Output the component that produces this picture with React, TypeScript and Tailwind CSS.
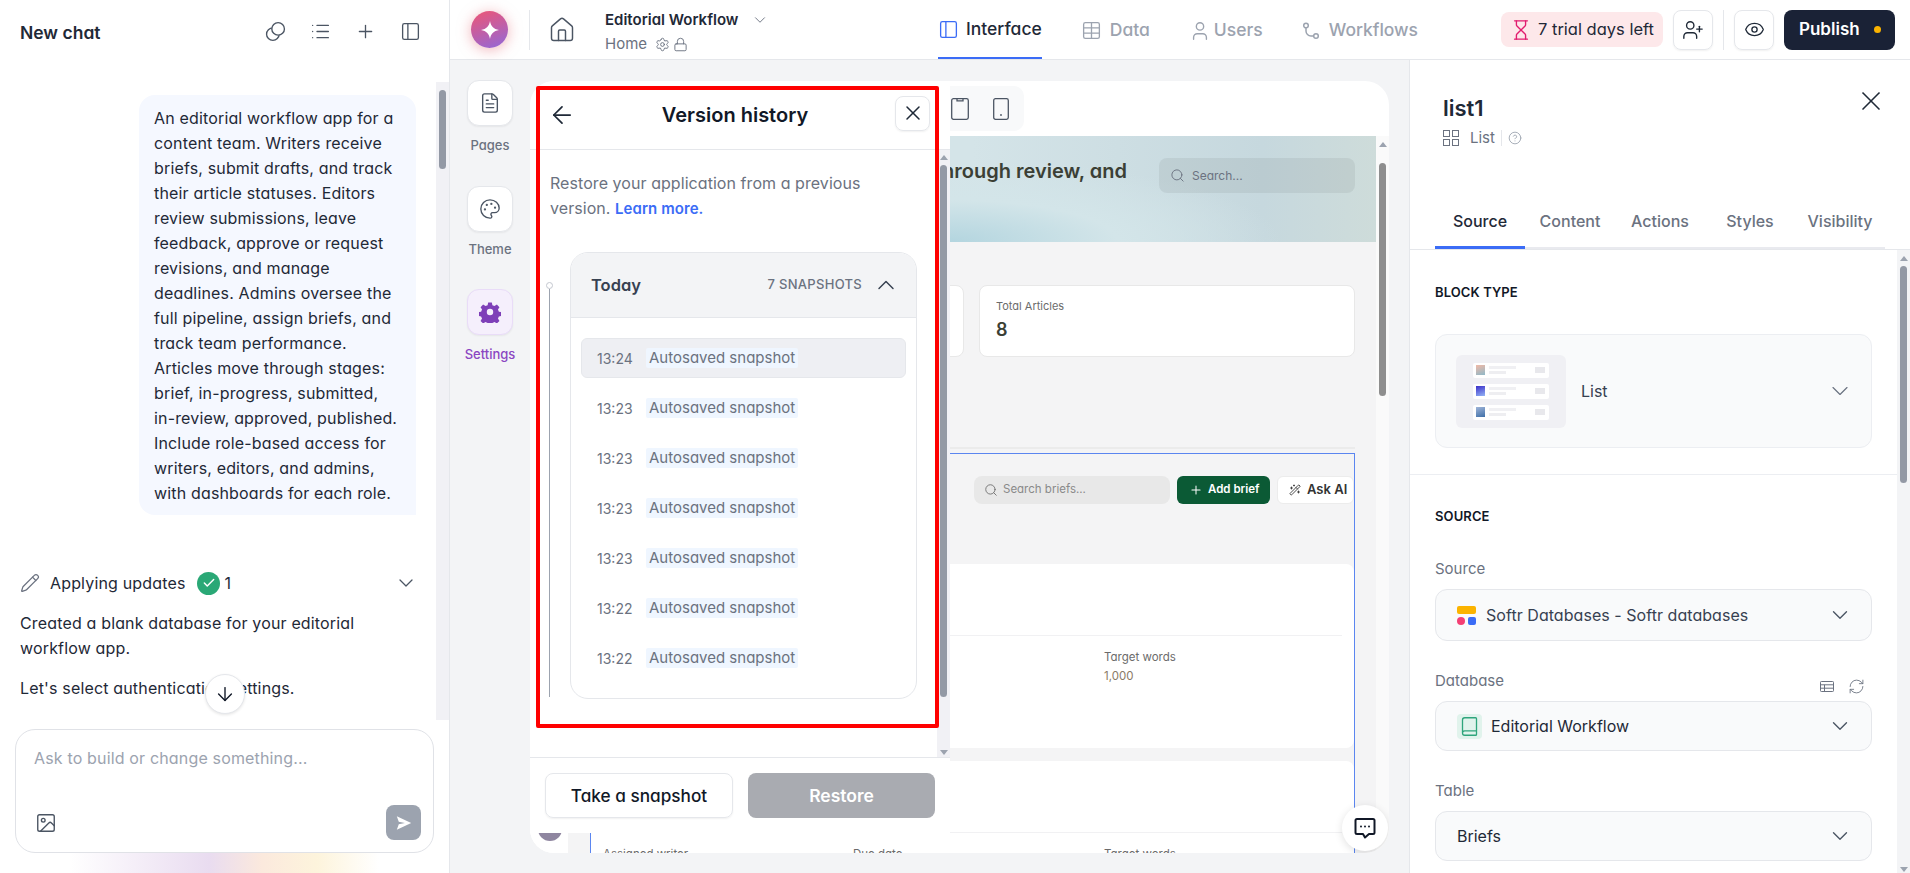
import {
  ArrowDown, ArrowLeft, ChevronDown, ChevronUp, CircleHelp, Eye, FileText, Hourglass, House, Image as ImageIcon,
  List, Lock, Palette, PanelLeft, Pencil, Plus, RefreshCw, Search, Settings, Table, User, UserPlus, X, Check, Book, WandSparkles,
} from "lucide-react";

function Up() {
  return <div className="w-0 h-0 border-x-[4px] border-x-transparent border-b-[5px] border-b-[#9ca3af]" />;
}
function Down() {
  return <div className="w-0 h-0 border-x-[4px] border-x-transparent border-t-[5px] border-t-[#9ca3af]" />;
}

function Row({ time, active }: { time: string; active?: boolean }) {
  return (
    <div className={active ? "h-[40px] mx-[10px] flex items-center rounded-[6px] border border-[#e5e7eb] bg-[#eeeff3] pl-[15px] text-[15px] text-[#6b7280]" : "h-[40px] mx-[10px] mt-[10px] flex items-center pl-[16px] text-[15px] text-[#6b7280]"}>
      <span className="w-[49px] shrink-0 text-[14px]">{time}</span>
      <span className="px-[3px] h-[20px] leading-[20px] rounded-[2px] bg-[#eff6ff]">Autosaved snapshot</span>
    </div>
  );
}

function VersionPanel() {
  return (
    <div className="absolute left-0 top-0 z-20 w-[420px] h-[752px] bg-white rounded-tl-[24px] flex flex-col">
      <div className="h-[69px] shrink-0 border-b border-[#e5e7eb] flex items-center relative">
        <ArrowLeft className="ml-[18px] size-[28px] text-[#1f2937]" strokeWidth={1.5} />
        <div className="absolute left-0 top-[20px] w-[410px] text-center text-[20px] leading-[28px] font-semibold text-[#111827]">Version history</div>
        <div className="ml-auto mr-[20px] mt-[-4px] size-[35px] rounded-[8px] border border-[#e5e7eb] flex items-center justify-center shadow-[0_1px_2px_rgba(0,0,0,0.06)]">
          <X className="size-[24px] text-[#1f2937]" strokeWidth={1.5} />
        </div>
      </div>
      <div className="flex h-[607px] shrink-0">
        <div className="flex-1 min-w-0">
          <div className="pl-[20px] pt-[21px] text-[16px] tracking-[0.06px] leading-[25px] text-[#6b7280]">
            <div>Restore your application from a previous</div>
            <div>version. <span className="text-[15px] font-semibold text-[#3b6cf6]">Learn more.</span></div>
          </div>
          <div className="flex mt-[31px] pl-[16px]">
            <div className="w-[6px] flex flex-col items-center pt-[30px]">
              <div className="size-[7px] rounded-full border border-[#c4c7cf] bg-white shrink-0" />
              <div className="w-px bg-[#9ca3af] h-[408px]" />
            </div>
            <div className="ml-[18px] w-[347px] h-[447px] rounded-[18px] border border-[#e5e7eb] overflow-hidden">
              <div className="h-[65px] bg-[#f3f4f6] border-b border-[#e5e7eb] flex items-center pl-[20px] pr-[16px]">
                <span className="text-[16.500px] font-semibold text-[#374151]">Today</span>
                <span className="ml-auto text-[13px] tracking-[0.3px] font-medium text-[#6b7280]">7 SNAPSHOTS</span>
                <ChevronUp className="ml-[10px] size-[28px] text-[#374151]" strokeWidth={1.25} />
              </div>
              <div className="pt-[20px]">
                <Row time="13:24" active />
                <Row time="13:23" />
                <Row time="13:23" />
                <Row time="13:23" />
                <Row time="13:23" />
                <Row time="13:22" />
                <Row time="13:22" />
              </div>
            </div>
          </div>
        </div>
        <div className="w-[13px] shrink-0 bg-[#f1f1f5] flex flex-col items-center pt-[5px] pb-[2px]">
          <Up />
          <div className="mt-[5px] w-[7px] h-[532px] rounded-full bg-[#9399a5]" />
          <div className="mt-auto"><Down /></div>
        </div>
      </div>
      <div className="h-[76px] shrink-0 border-t border-[#e5e7eb] flex items-start pt-[15px] pl-[15px] gap-[15px]">
        <div className="w-[188px] h-[45px] pt-[1px] rounded-[8px] border border-[#e5e7eb] shadow-[0_1px_2px_rgba(0,0,0,0.06)] flex items-center justify-center text-[17.200px] font-medium text-[#111827]">Take a snapshot</div>
        <div className="w-[187px] h-[45px] pt-[1px] rounded-[8px] bg-[#a9abb1] flex items-center justify-center text-[17.500px] font-semibold text-white">Restore</div>
      </div>
    </div>
  );
}

function BriefCard({ first }: { first?: boolean }) {
  return (
    <div className="h-[184px] bg-white rounded-r-[8px] overflow-hidden shrink-0">
      <div className="h-[72px] mr-[12px] border-b border-[#f1f1f3]" />
      <div className="flex pl-[12px] pt-[12px] text-[11.500px] leading-[19px] text-[#6b6b6b]">
        <div className="w-[250px]">{first ? null : "Assigned writer"}</div>
        <div className="w-[251px]">{first ? null : "Due date"}</div>
        <div>
          <div>Target words</div>
          {first ? <div className="text-[#8a7a66]">1,000</div> : null}
        </div>
      </div>
    </div>
  );
}

function Preview() {
  return (
    <div className="relative w-[859px] h-[772px] mt-[21px] bg-white rounded-[24px] overflow-hidden flex flex-col">
      <VersionPanel />
      <div className="h-[55px] shrink-0 flex items-start">
        <div className="ml-[410px] mt-[5px] w-[84px] h-[45px] rounded-r-[10px] bg-[#f8f9fa] flex items-center pl-[11px] gap-[24px] text-[#4b5563]">
          <svg viewBox="0 0 18 22" className="w-[18px] h-[22px]" fill="none" stroke="currentColor" strokeWidth="1.300">
            <rect x="0.700" y="0.700" width="16.600" height="20.600" rx="1.800" /><path d="M6 1v1.800h6V1" />
          </svg>
          <svg viewBox="0 0 16 22" className="w-[16px] h-[22px]" fill="none" stroke="currentColor" strokeWidth="1.300">
            <rect x="0.700" y="0.700" width="14.600" height="20.600" rx="1.800" /><circle cx="8" cy="17" r="0.900" fill="currentColor" stroke="none" />
          </svg>
        </div>
      </div>
      <div className="flex flex-1 min-h-0">
        <div className="w-[38px] shrink-0 bg-white relative">
          <div className="absolute left-[8px] bottom-[12px] size-[24px] rounded-full bg-[#8f86a0]" />
        </div>
        <div className="flex-1 min-w-0 bg-[#f4f4f5] flex flex-col overflow-hidden">
          <div className="h-[106px] shrink-0 bg-[radial-gradient(ellipse_at_47%_100%,#b3d5df_0%,#d3e5e9_28%,transparent_55%),linear-gradient(90deg,#d4e4e8_50%,#c6d8de_86%,#cedcda_100%)] flex justify-end pr-[21px] pt-[22px] gap-[32px]">
            <div className="text-[20px] leading-[28px] font-semibold text-[#3b3f35] whitespace-nowrap mt-[-1px]">through review, and</div>
            <div className="w-[196px] h-[35px] rounded-[8px] bg-[#0000000f] flex items-center pl-[11px] gap-[7px] text-[12px] text-[#6b7280]">
              <Search className="size-[15px]" strokeWidth={1.5} />Search...
            </div>
          </div>
          <div className="flex justify-end gap-[15px] pr-[21px] mt-[43px] shrink-0">
            <div className="w-[200px] h-[72px] rounded-[8px] bg-white border border-[#e8e8e8]" />
            <div className="w-[376px] h-[72px] rounded-[8px] bg-white border border-[#e8e8e8] pl-[16px] pt-[12px]">
              <div className="text-[11px] leading-[16px] text-[#6b6b6b]">Total Articles</div>
              <div className="text-[18px] leading-[26px] mt-[3px] font-semibold text-[#3b3f35]">8</div>
            </div>
          </div>
          <div className="mt-[90px] mr-[21px] ml-[22px] h-[2px] shrink-0 bg-[#ebebeb]" />
          <div className="mt-[4px] mr-[21px] ml-[22px] border border-b-0 border-[#5b86f0] flex-1 flex flex-col gap-[13px] min-h-0">
            <div className="h-[97px] shrink-0 flex justify-end items-start pt-[22px] gap-[7px]">
              <div className="w-[196px] h-[28px] rounded-[8px] bg-[#e8e8e8] flex items-center pl-[10px] gap-[5px] text-[11.500px] text-[#8a8a8a]">
                <Search className="size-[14px] text-[#6b6b6b]" strokeWidth={1.5} />Search briefs...
              </div>
              <div className="w-[93px] h-[28px] rounded-[6px] bg-[#0b5a35] flex items-center pl-[12px] gap-[5px] text-[11.500px] font-semibold text-white">
                <Plus className="size-[14px]" strokeWidth={1.75} />Add brief
              </div>
              <div className="w-[77px] h-[28px] rounded-[6px] bg-white border border-[#ececec] flex items-center pl-[11px] gap-[6px] text-[13px] font-semibold text-[#333]">
                <WandSparkles className="size-[12px]" strokeWidth={1.75} />Ask AI
              </div>
            </div>
            <BriefCard first />
            <BriefCard />
          </div>
        </div>
        <div className="w-[13px] shrink-0 bg-[#fafafa] flex flex-col items-center pt-[6px]">
          <Up />
          <div className="mt-[16px] w-[7px] h-[233px] rounded-full bg-[#8e8e8e]" />
        </div>
      </div>
      <div className="absolute left-[812px] top-[724px] z-30 size-[46px] rounded-full bg-white shadow-[0_2px_8px_rgba(0,0,0,0.12)] flex items-center justify-center">
        <svg viewBox="0 0 24 24" className="size-[24px]" fill="none" stroke="#111827" strokeWidth="2" strokeLinejoin="round">
          <path d="M4 3h16a1.500 1.500 0 0 1 1.500 1.500v12a1.500 1.500 0 0 1-1.500 1.500h-4l-4 3.500-2-3.500H4a1.500 1.500 0 0 1-1.500-1.500v-12A1.500 1.500 0 0 1 4 3Z" />
          <circle cx="8" cy="10.500" r="1" fill="#111827" stroke="none" />
          <circle cx="12" cy="10.500" r="1" fill="#111827" stroke="none" />
          <circle cx="16" cy="10.500" r="1" fill="#111827" stroke="none" />
        </svg>
      </div>
    </div>
  );
}

function RailItem({ label, active, top, gap, children }: { label: string; active?: boolean; top: string; gap: string; children: React.ReactNode }) {
  return (
    <div className={"flex flex-col items-center w-[70px] " + top}>
      <div className={active ? "size-[46px] rounded-[12px] border border-[#e9dcf8] bg-[#f5effc] shadow-[0_1px_2px_rgba(0,0,0,0.06)] flex items-center justify-center" : "size-[46px] rounded-[12px] border border-[#e5e7eb] bg-white shadow-[0_1px_2px_rgba(0,0,0,0.06)] flex items-center justify-center"}>
        {children}
      </div>
      <div className={gap + (active ? " text-[13px] leading-[16px] font-medium text-[#8b46c2]" : " text-[13px] leading-[16px] font-medium text-[#6b7280]")}>{label}</div>
    </div>
  );
}

function Chat() {
  return (
    <aside className="w-[450px] shrink-0 h-full border-r border-[#e5e7eb] bg-white flex flex-col">
      <div className="h-[82px] shrink-0 flex items-start pt-[21px] pl-[20px] pr-[28px]">
        <div className="text-[17.500px] leading-[24px] font-semibold text-[#1f2937]">New chat</div>
        <div className="ml-auto flex gap-[24px] text-[#4b5563]">
          <svg viewBox="0 0 20 20" className="size-[21px]" fill="none" stroke="currentColor" strokeWidth="1.300">
            <circle cx="7.500" cy="12.500" r="6" /><circle cx="12.500" cy="7.500" r="6" fill="white" />
          </svg>
          <List className="size-[21px]" strokeWidth={1.5} />
          <Plus className="size-[21px]" strokeWidth={1.5} />
          <PanelLeft className="size-[21px]" strokeWidth={1.5} />
        </div>
      </div>
      <div className="h-[638px] shrink-0 flex relative">
        <div className="flex-1 min-w-0 overflow-hidden text-[16px] tracking-[0.16px] leading-[25px] text-[#1f2937]">
          <div className="ml-[139px] mt-[13px] w-[277px] h-[420px] rounded-[16px] rounded-br-none bg-[#f5f8ff] pl-[15px] pt-[11px]">
            <div>An editorial workflow app for a</div>
            <div>content team. Writers receive</div>
            <div>briefs, submit drafts, and track</div>
            <div>their article statuses. Editors</div>
            <div>review submissions, leave</div>
            <div>feedback, approve or request</div>
            <div>revisions, and manage</div>
            <div>deadlines. Admins oversee the</div>
            <div>full pipeline, assign briefs, and</div>
            <div>track team performance.</div>
            <div>Articles move through stages:</div>
            <div>brief, in-progress, submitted,</div>
            <div>in-review, approved, published.</div>
            <div>Include role-based access for</div>
            <div>writers, editors, and admins,</div>
            <div>with dashboards for each role.</div>
          </div>
          <div className="ml-[20px] mr-[18px] mt-[56px] h-[24px] flex items-center">
            <Pencil className="size-[20px] text-[#6b7280]" strokeWidth={1.5} />
            <span className="ml-[10px]">Applying updates</span>
            <span className="ml-[12px] size-[23px] rounded-full bg-[#2aa876] flex items-center justify-center">
              <Check className="size-[14px] text-white" strokeWidth={2.5} />
            </span>
            <span className="ml-[4px]">1</span>
            <ChevronDown className="ml-auto size-[24px] text-[#4b5563]" strokeWidth={1.25} />
          </div>
          <div className="ml-[20px] mt-[16px]">
            <div>Created a blank database for your editorial</div>
            <div>workflow app.</div>
            <div className="mt-[15px]">Let's select authentication settings.</div>
          </div>
        </div>
        <div className="absolute left-[205px] top-[592px] size-[40px] rounded-full bg-white border border-[#e5e7eb] shadow-[0_1px_3px_rgba(0,0,0,0.1)] flex items-center justify-center">
          <ArrowDown className="size-[22px] text-[#111827]" strokeWidth={1.5} />
        </div>
        <div className="w-[13px] shrink-0 bg-[#f1f1f5] flex flex-col items-center pt-[8px]">
          <div className="w-[7px] h-[79px] rounded-full bg-[#9399a5]" />
        </div>
      </div>
      <div className="mt-[9px] ml-[15px] w-[419px] h-[124px] shrink-0 rounded-[20px] border border-[#e0e2e7] relative flex flex-col">
        <div className="pl-[18px] pt-[16px] text-[16px] tracking-[0.16px] leading-[24px] text-[#9ca3af]">Ask to build or change something...</div>
        <div className="mt-auto mb-[12px] pl-[19px] pr-[12px] flex items-center justify-between">
          <ImageIcon className="size-[22px] text-[#4b5563]" strokeWidth={1.5} />
          <div className="size-[35px] rounded-[8px] bg-[#9ca3af] flex items-center justify-center">
            <svg viewBox="0 0 20 20" className="size-[18px]" fill="white"><path d="M2 2.500 18 10 2 17.500l2.200-6.200L11 10 4.200 8.700Z" /></svg>
          </div>
        </div>
      </div>
      <div className="mx-[70px] h-[20px] bg-[linear-gradient(90deg,#ffffff_0%,#e9dcf0_45%,#fbe9dd_62%,#fdf4dc_80%,#ffffff_100%)]" />
    </aside>
  );
}

function TopBar() {
  return (
    <header className="h-[60px] shrink-0 bg-white border-b border-[#e5e7eb] flex items-center">
      <div className="ml-[21px] size-[37px] rounded-full bg-[linear-gradient(160deg,#e5577e_10%,#9b66cf_90%)] shadow-[0_2px_14px_rgba(229,120,130,0.55)] flex items-center justify-center">
        <svg viewBox="0 0 20 20" className="size-[20px]" fill="white"><path d="M10 1c.8 5 3.500 8.200 9 9-5.500.8-8.200 4-9 9-.8-5-3.500-8.200-9-9 5.500-.8 8.200-4 9-9Z" /></svg>
      </div>
      <div className="ml-[21px] w-px h-[40px] bg-[#e5e7eb]" />
      <House className="ml-[18px] size-[28px] text-[#4b5563]" strokeWidth={1.25} />
      <div className="ml-[29px] w-[333px] mt-[5px]">
        <div className="flex items-center h-[24px] text-[15px] font-semibold text-[#1f2937]">
          Editorial Workflow
          <ChevronDown className="ml-[13px] size-[18px] text-[#6b7280]" strokeWidth={1.25} />
        </div>
        <div className="flex items-center h-[24px] text-[15px] text-[#6b7280]">
          Home
          <Settings className="ml-[8px] size-[15px]" strokeWidth={1.5} />
          <Lock className="ml-[3px] size-[15px]" strokeWidth={1.5} />
        </div>
      </div>
      <div className="h-full flex items-center text-[17.500px] font-medium text-[#9ca3af] gap-[39px]">
        <div className="h-full flex items-center gap-[7px] pt-[2px] border-b-2 border-[#3b6cf6] text-[#1f2937]">
          <PanelLeft className="size-[21px] text-[#3b6cf6]" strokeWidth={1.5} />Interface
        </div>
        <div className="flex items-center gap-[8px] pt-[2px]">
          <Table className="size-[21px]" strokeWidth={1.5} />Data
        </div>
        <div className="flex items-center gap-[3px] pt-[2px]">
          <User className="size-[22px]" strokeWidth={1.5} />Users
        </div>
        <div className="flex items-center gap-[9px] pt-[2px]">
          <svg viewBox="0 0 18 18" className="size-[18px]" fill="none" stroke="currentColor" strokeWidth="1.500">
            <circle cx="4" cy="3.500" r="2.300" /><circle cx="14" cy="14" r="2.300" /><path d="M4 6v3a5 5 0 0 0 5 5h2.500" />
          </svg>Workflows
        </div>
      </div>
      <div className="ml-auto mr-[15px] flex items-center">
        <div className="w-[162px] h-[35px] rounded-[8px] bg-[#fde8ea] flex items-center pl-[9px] gap-[6px] text-[16.500px] text-[#1f2937]">
          <Hourglass className="size-[22px] text-[#e11d6f]" strokeWidth={1.5} />7 trial days left
        </div>
        <div className="ml-[10px] size-[40px] rounded-[8px] border border-[#e5e7eb] shadow-[0_1px_2px_rgba(0,0,0,0.06)] flex items-center justify-center">
          <UserPlus className="size-[22px] text-[#1f2937]" strokeWidth={1.5} />
        </div>
        <div className="ml-[10px] w-px h-[40px] bg-[#e5e7eb]" />
        <div className="ml-[10px] size-[40px] rounded-[8px] border border-[#e5e7eb] shadow-[0_1px_2px_rgba(0,0,0,0.06)] flex items-center justify-center">
          <Eye className="size-[21px] text-[#1f2937]" strokeWidth={1.5} />
        </div>
        <div className="ml-[10px] w-[111px] h-[40px] rounded-[8px] bg-[#1a2236] flex items-center pl-[15px] text-[17px] font-semibold text-white">
          Publish
          <span className="ml-[14px] size-[7px] rounded-full bg-[#fbb300]" />
        </div>
      </div>
    </header>
  );
}

function Select({ h, children }: { h: string; children: React.ReactNode }) {
  return (
    <div className={h + " rounded-[12px] border border-[#e5e7eb] bg-[#f9fafb] flex items-center pl-[21px] pr-[18px] text-[16px] text-[#374151]"}>
      {children}
      <ChevronDown className="ml-auto size-[26px] text-[#4b5563]" strokeWidth={1.25} />
    </div>
  );
}

function ThumbRow({ c }: { c: string }) {
  return (
    <div className="h-[15px] w-[76px] rounded-[2px] bg-white flex items-center pl-[3px] pr-[4px]">
      <div className={"w-[9px] h-[10px] " + c} />
      <div className="ml-[4px] flex flex-col gap-[2px]">
        <div className="w-[27px] h-[3px] bg-[#f0f0f3]" />
        <div className="w-[17px] h-[3px] bg-[#eeeef1]" />
      </div>
      <div className="ml-auto w-[10px] h-[6px] bg-[#e8e8ec]" />
    </div>
  );
}

function RightPanel() {
  return (
    <aside className="w-[501px] shrink-0 h-full bg-white border-l border-[#e5e7eb] flex flex-col">
      <div className="h-[129px] shrink-0 pl-[33px] pr-[23px] pt-[33px] flex justify-between">
        <div>
          <div className="text-[22px] leading-[30px] font-semibold text-[#1f2937]">list1</div>
          <div className="mt-[5px] flex items-center text-[15px] text-[#6b7280] h-[20px]">
            <svg viewBox="0 0 16 16" className="size-[16px]" fill="none" stroke="currentColor" strokeWidth="1">
              <rect x="0.500" y="0.500" width="6" height="6" /><rect x="9.500" y="0.500" width="6" height="6" />
              <rect x="0.500" y="9.500" width="6" height="6" /><rect x="9.500" y="9.500" width="6" height="6" />
            </svg>
            <span className="ml-[11px]">List</span>
            <span className="ml-[6px] w-px h-[16px] bg-[#e5e7eb]" />
            <CircleHelp className="ml-[6px] size-[14px] text-[#9ca3af]" strokeWidth={1.5} />
          </div>
        </div>
        <X className="mt-[-8px] size-[32px] text-[#1f2937]" strokeWidth={1.25} />
      </div>
      <div className="h-[60px] shrink-0 ml-[25px] mr-[25px] border-b-2 border-[#e9eaef] flex text-[16px] font-medium text-[#6b7280]">
        <div className="w-[90px] h-[60px] -mb-[2px] pt-[6px] flex items-center justify-center text-[#1f2937] border-b-[3px] border-[#3b6cf6]">Source</div>
        <div className="w-[90px] h-[58px] pt-[6px] flex items-center justify-center">Content</div>
        <div className="w-[90px] h-[58px] pt-[6px] flex items-center justify-center">Actions</div>
        <div className="w-[90px] h-[58px] pt-[6px] flex items-center justify-center">Styles</div>
        <div className="w-[90px] h-[58px] pt-[6px] flex items-center justify-center">Visibility</div>
      </div>
      <div className="flex-1 min-h-0 flex border-t border-[#e5e7eb]">
        <div className="flex-1 min-w-0 overflow-hidden">
          <div className="px-[25px] pt-[33px]">
            <div className="text-[13px] leading-[18px] font-semibold tracking-[0.1px] text-[#111827]">BLOCK TYPE</div>
            <div className="mt-[33px] w-[437px] h-[114px] rounded-[12px] border border-[#eceef2] bg-[#f9fafb] flex items-center pl-[20px] pr-[17px] text-[16px] text-[#374151]">
              <div className="w-[110px] h-[73px] rounded-[6px] bg-[#f0f0f4] flex flex-col items-center justify-center gap-[6px]">
                <ThumbRow c="bg-[linear-gradient(160deg,#f1b9a6,#8fb8c8)]" />
                <ThumbRow c="bg-[linear-gradient(160deg,#3b2fc9,#93b4f5)]" />
                <ThumbRow c="bg-[linear-gradient(160deg,#9fb4d8,#3f6fa8)]" />
              </div>
              <span className="ml-[15px]">List</span>
              <ChevronDown className="ml-auto size-[28px] text-[#6b7280]" strokeWidth={1} />
            </div>
          </div>
          <div className="mt-[26px] border-t border-[#eceef2] px-[25px] pt-[32px]">
            <div className="text-[13px] leading-[18px] font-semibold tracking-[0.1px] text-[#111827]">SOURCE</div>
            <div className="mt-[34px] w-[437px] text-[15px] leading-[20px] text-[#6b7280]">Source</div>
            <div className="mt-[10px] w-[437px]">
              <Select h="h-[52px]">
                <div className="w-[19px] h-[19px] shrink-0 flex flex-wrap justify-between content-between">
                  <div className="w-[19px] h-[8px] rounded-[2px] bg-[#fbb300]" />
                  <div className="size-[8px] rounded-full bg-[#f43f74]" />
                  <div className="size-[8px] rounded-[2px] bg-[#3b6cf6]" />
                </div>
                <span className="ml-[10px] tracking-[0.05px]">Softr Databases - Softr databases</span>
              </Select>
            </div>
            <div className="mt-[30px] w-[437px] h-[20px] flex items-center text-[15px] text-[#6b7280]">
              Database
              <svg viewBox="0 0 14 11" className="ml-auto mt-[10px] w-[14px] h-[11px]" fill="none" stroke="currentColor" strokeWidth="1">
                <rect x="0.500" y="0.500" width="13" height="10" rx="0.800" /><path d="M0.500 3.800h13M0.500 7.200h13M4.500 3.800v6.700" />
              </svg>
              <RefreshCw className="ml-[14px] mr-[7px] mt-[10px] size-[17px]" strokeWidth={1.25} />
            </div>
            <div className="mt-[10px] w-[437px]">
              <Select h="h-[50px]">
                <div className="size-[25px] shrink-0 rounded-[4px] bg-[#e1f3ec] flex items-center justify-center">
                  <Book className="size-[21px] text-[#2fa57c]" strokeWidth={1.5} />
                </div>
                <span className="ml-[9px] text-[#1f2937]">Editorial Workflow</span>
              </Select>
            </div>
            <div className="mt-[30px] w-[437px] text-[15px] leading-[20px] text-[#6b7280]">Table</div>
            <div className="mt-[10px] w-[437px]">
              <Select h="h-[50px]"><span className="text-[#1f2937]">Briefs</span></Select>
            </div>
          </div>
        </div>
        <div className="w-[13px] shrink-0 bg-[#f3f4f6] flex flex-col items-center pt-[6px] pb-[1px]">
          <Up />
          <div className="mt-[5px] w-[7px] h-[217px] rounded-full bg-[#9399a5]" />
          <div className="mt-auto"><Down /></div>
        </div>
      </div>
    </aside>
  );
}

export default function App() {
  return (
    <div className="relative w-[1910px] h-[873px] overflow-hidden flex font-[Inter,sans-serif] [font-feature-settings:'cv11'] bg-white">
      <Chat />
      <div className="flex-1 min-w-0 flex flex-col">
        <TopBar />
        <div className="flex flex-1 min-h-0">
          <div className="flex-1 min-w-0 bg-[#f3f4f6] flex items-start">
            <div className="w-[80px] flex flex-col items-center shrink-0">
              <RailItem label="Pages" top="mt-[20px]" gap="mt-[11px]"><FileText className="size-[22px] text-[#4b5563]" strokeWidth={1.5} /></RailItem>
              <RailItem label="Theme" top="mt-[33px]" gap="mt-[9px]"><Palette className="size-[22px] text-[#4b5563]" strokeWidth={1.5} /></RailItem>
              <RailItem label="Settings" active top="mt-[32px]" gap="mt-[11px]">
                <svg viewBox="0 0 24 24" className="size-[22px]" fill="#7e3fb8"><path fillRule="evenodd" d="M10 1.500h4l.6 3 2.300 1 2.600-1.600 2.800 2.800-1.600 2.600 1 2.300 3 .6v4l-3 .6-1 2.300 1.600 2.600-2.800 2.800-2.600-1.600-2.300 1-.6 3h-4l-.6-3-2.300-1-2.600 1.600-2.800-2.800 1.600-2.600-1-2.300-3-.6v-4l3-.6 1-2.300-1.600-2.600 2.800-2.800 2.600 1.600 2.300-1ZM12 8.500a3.500 3.500 0 1 0 0 7 3.500 3.500 0 0 0 0-7Z" /></svg>
              </RailItem>
            </div>
            <Preview />
          </div>
          <RightPanel />
        </div>
      </div>
      <div className="absolute left-[536px] top-[86px] z-40 w-[403px] h-[642px] border-[4px] border-[#ff0000] rounded-[2px] pointer-events-none" />
    </div>
  );
}
